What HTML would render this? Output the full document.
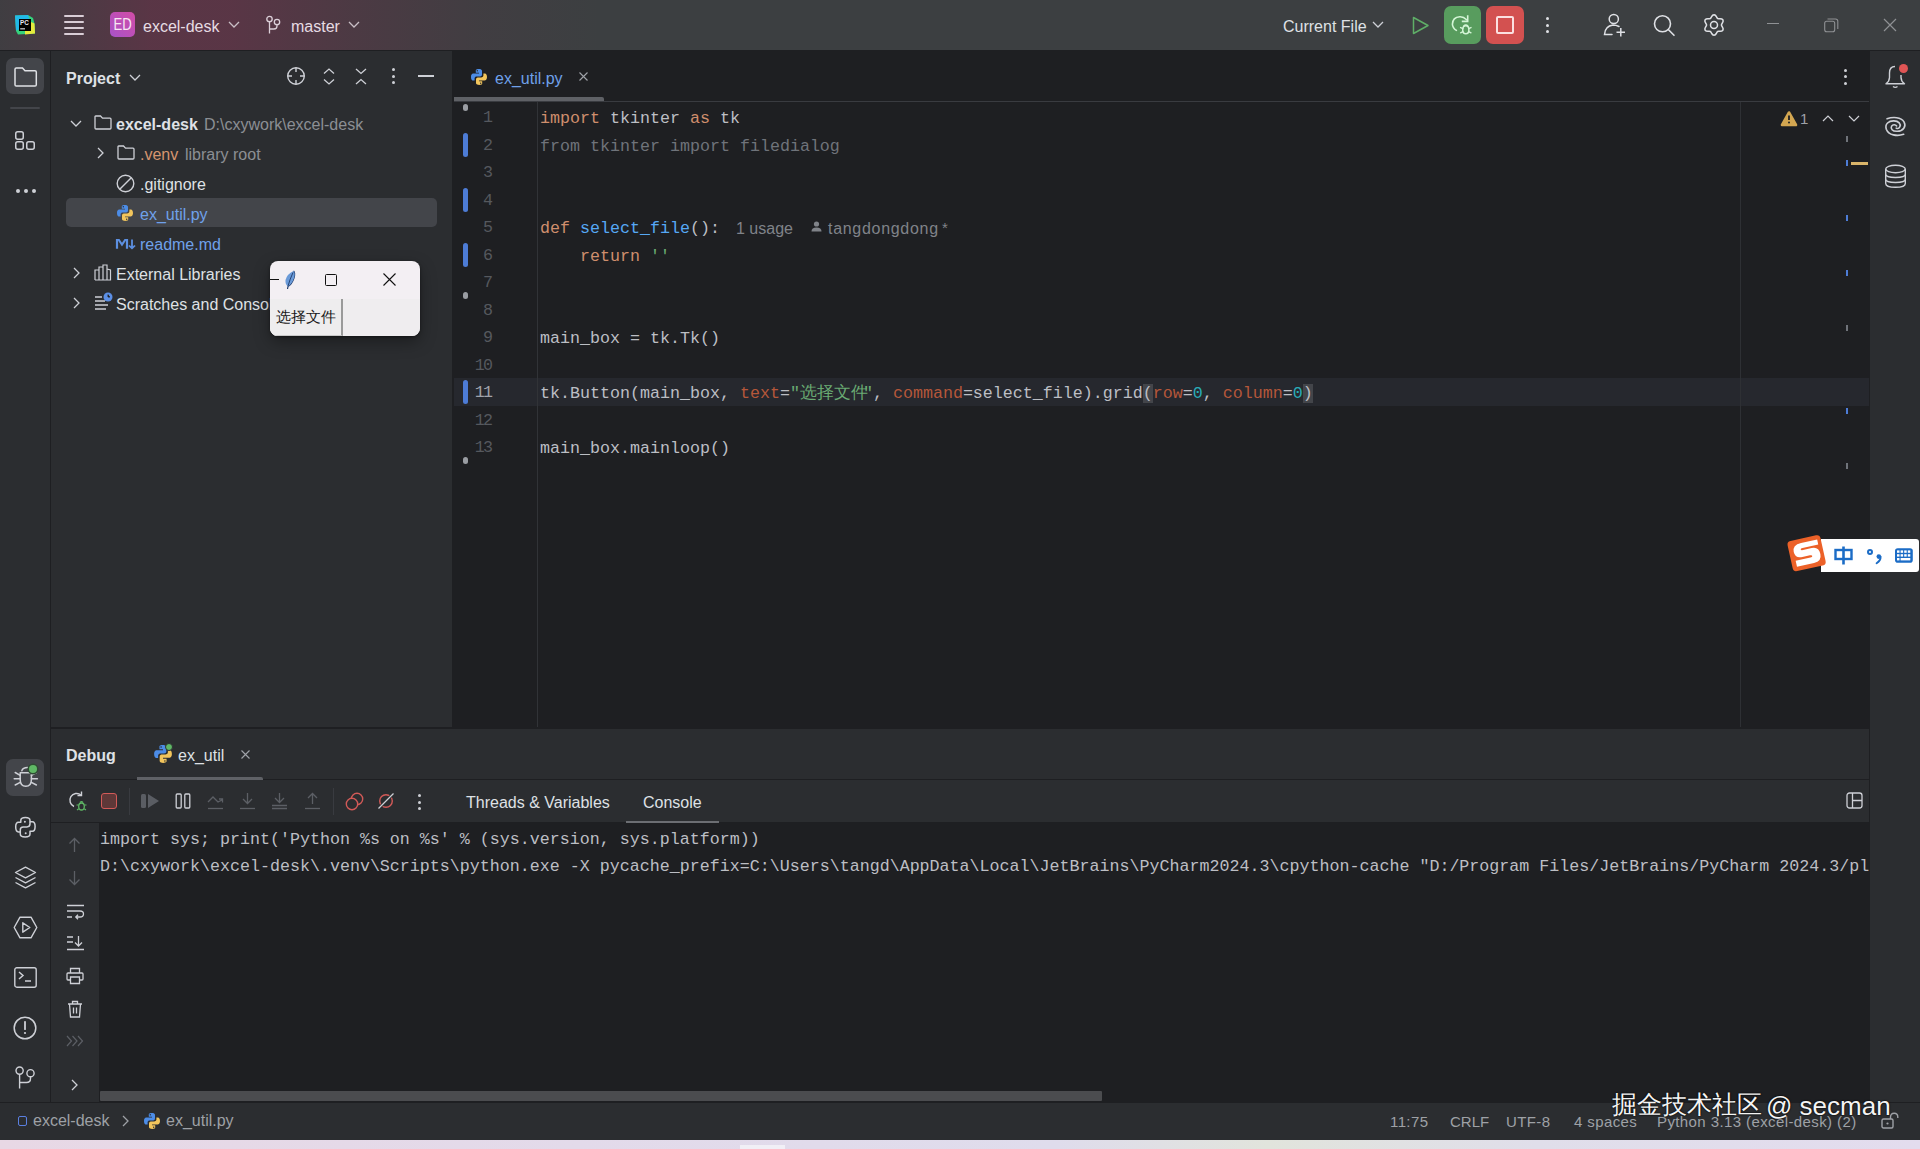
<!DOCTYPE html>
<html><head><meta charset="utf-8">
<style>
*{box-sizing:border-box}
html,body{margin:0;padding:0}
body{width:1920px;height:1149px;overflow:hidden;position:relative;background:#2B2D30;font-family:"Liberation Sans",sans-serif;font-size:16px;color:#DFE1E5}
.a{position:absolute}
.mono{font-family:"Liberation Mono",monospace;font-size:16.67px;white-space:pre}
.t{white-space:pre;line-height:20px}
svg{position:absolute;overflow:visible}
</style></head><body>

<!-- TITLE BAR -->
<div class="a" id="title" style="left:0;top:0;width:1920px;height:50px;background:linear-gradient(90deg, rgba(125,42,75,0.06) 0px, rgba(125,42,75,0.22) 70px, rgba(125,42,75,0.45) 150px, rgba(125,42,75,0.45) 230px, rgba(125,42,75,0.25) 350px, rgba(125,42,75,0.07) 480px, rgba(125,42,75,0) 600px),#3C3F41">
 <!-- pycharm logo -->
 <svg style="left:14px;top:14px" width="22" height="22" viewBox="0 0 22 22">
  <path d="M1 1.5 L14 1 L19 4 L20.5 9.5 L21 19.5 L4 20.6 L2 17 Z" fill="#34D27C"/>
  <path d="M1 1.5 L14 1 L15.5 5 L5 5 L5 15.5 L2 16.5 Z" fill="#22B9E9"/>
  <path d="M17 8 L20.5 9.5 L21 19.5 L11 20.6 L11 17 L17 17 Z" fill="#E6EA3C"/>
  <rect x="5" y="5" width="12" height="12" fill="#000"/>
  <text x="6" y="11.3" font-family="Liberation Sans" font-size="6.3" font-weight="700" fill="#E8E8F0">PC</text>
  <rect x="6.2" y="14.3" width="4.8" height="1.1" fill="#E8E8F0"/>
 </svg>
 <!-- hamburger -->
 <div class="a" style="left:64px;top:15px;width:20px;height:2px;background:#D9CDD6;border-radius:1px"></div>
 <div class="a" style="left:64px;top:21px;width:20px;height:2px;background:#D9CDD6;border-radius:1px"></div>
 <div class="a" style="left:64px;top:27px;width:20px;height:2px;background:#D9CDD6;border-radius:1px"></div>
 <div class="a" style="left:64px;top:33px;width:20px;height:2px;background:#D9CDD6;border-radius:1px"></div>
 <!-- ED badge -->
 <div class="a" style="left:110px;top:12px;width:25px;height:25px;border-radius:5px;background:linear-gradient(45deg,#A853C9,#D14CA6)"></div>
 <div class="a t" style="left:111px;top:15px;width:23px;text-align:center;font-size:16px;color:#F8E8F4;letter-spacing:0px;transform:scaleX(0.82)">ED</div>
 <div class="a t" style="left:143px;top:17px;color:#E6DCE3">excel-desk</div>
 <svg style="left:228px;top:21px" width="12" height="7" viewBox="0 0 12 7"><path d="M1 1 L6 6 L11 1" fill="none" stroke="#C9BFC6" stroke-width="1.3"/></svg>
 <!-- branch -->
 <svg style="left:264px;top:14px" width="18" height="22" viewBox="0 0 18 22">
  <circle cx="5.5" cy="5" r="2.7" fill="none" stroke="#DCD0D9" stroke-width="1.3"/>
  <circle cx="13" cy="8" r="2.7" fill="none" stroke="#DCD0D9" stroke-width="1.3"/>
  <path d="M5.5 7.7 V19.5 M13 10.7 V12 Q13 15 10 15 H5.5" fill="none" stroke="#DCD0D9" stroke-width="1.3"/>
 </svg>
 <div class="a t" style="left:291px;top:17px;color:#E6DCE3">master</div>
 <svg style="left:348px;top:21px" width="12" height="7" viewBox="0 0 12 7"><path d="M1 1 L6 6 L11 1" fill="none" stroke="#C9BFC6" stroke-width="1.3"/></svg>
 <!-- right side -->
 <div class="a t" style="left:1283px;top:17px;color:#DFE1E5">Current File</div>
 <svg style="left:1372px;top:21px" width="12" height="7" viewBox="0 0 12 7"><path d="M1 1 L6 6 L11 1" fill="none" stroke="#CED0D6" stroke-width="1.3"/></svg>
 <svg style="left:1412px;top:16px" width="18" height="19" viewBox="0 0 18 19"><path d="M1.5 1.5 L16 9.5 L1.5 17.5 Z" fill="none" stroke="#5FAE67" stroke-width="1.5" stroke-linejoin="round"/></svg>
 <div class="a" style="left:1444px;top:6px;width:37px;height:38px;border-radius:7px;background:#589C5E"></div>
 <svg style="left:1444px;top:6px" width="38" height="38" viewBox="1444 6 38 38">
  <path d="M1466.6 19.8 Q1463.5 16.6 1459.8 16.8 Q1452.6 17.4 1452.4 24.2 Q1452.6 28 1456.4 30.4" fill="none" stroke="#D4F5D6" stroke-width="1.6" stroke-linecap="round"/>
  <path d="M1467.7 15.2 V21.4 H1461.8" fill="none" stroke="#D4F5D6" stroke-width="1.6"/>
  <path d="M1465.8 25.8 C1468.4 25.8 1468.9 28.2 1468.9 30 C1468.9 32.2 1467.6 33.8 1465.8 33.8 C1464 33.8 1462.7 32.2 1462.7 30 C1462.7 28.2 1463.2 25.8 1465.8 25.8 Z" fill="none" stroke="#D4F5D6" stroke-width="1.5"/>
  <path d="M1463.6 26.3 Q1465.8 23.8 1468 26.3 M1460.6 27.6 L1462.9 28.6 M1471 27.6 L1468.7 28.6 M1460.6 32.8 L1462.9 31.6 M1471 32.8 L1468.7 31.6" fill="none" stroke="#D4F5D6" stroke-width="1.4" stroke-linecap="round"/>
 </svg>
 <div class="a" style="left:1486px;top:6px;width:38px;height:38px;border-radius:7px;background:#D35150"></div>
 <div class="a" style="left:1496px;top:16px;width:18px;height:18px;border-radius:2px;border:2px solid #FBE0E0"></div>
 <div class="a" style="left:1546px;top:17px;width:3px;height:3px;border-radius:2px;background:#DFE1E5"></div>
 <div class="a" style="left:1546px;top:23.5px;width:3px;height:3px;border-radius:2px;background:#DFE1E5"></div>
 <div class="a" style="left:1546px;top:30px;width:3px;height:3px;border-radius:2px;background:#DFE1E5"></div>
 <svg style="left:1603px;top:13px" width="24" height="25" viewBox="0 0 24 25">
  <circle cx="10.8" cy="6" r="4.6" fill="none" stroke="#DFE1E5" stroke-width="1.5"/>
  <path d="M16 13.5 Q13 12 10 12 Q2 13 1.5 21.5 H9" fill="none" stroke="#DFE1E5" stroke-width="1.5" stroke-linecap="round"/>
  <path d="M17.8 15 V23.5 M13.5 19.2 H22" fill="none" stroke="#DFE1E5" stroke-width="1.5"/>
 </svg>
 <svg style="left:1652px;top:14px" width="24" height="24" viewBox="0 0 24 24">
  <circle cx="10.5" cy="9.8" r="8" fill="none" stroke="#DFE1E5" stroke-width="1.6"/>
  <path d="M16.3 15.5 L22 21.3" fill="none" stroke="#DFE1E5" stroke-width="1.6" stroke-linecap="round"/>
 </svg>
 <svg style="left:1702px;top:13px" width="24" height="24" viewBox="-12 -12 24 24">
  <path id="gear" d="M0.00 -10.30 L1.29 -9.79 L2.29 -8.55 L2.99 -7.23 L3.70 -6.41 L4.76 -6.21 L6.26 -6.26 L7.83 -6.01 L8.92 -5.15 L9.12 -3.78 L8.55 -2.29 L7.76 -1.02 L7.40 -0.00 L7.76 1.02 L8.55 2.29 L9.12 3.78 L8.92 5.15 L7.83 6.01 L6.26 6.26 L4.76 6.21 L3.70 6.41 L2.99 7.23 L2.29 8.55 L1.29 9.79 L0.00 10.30 L-1.29 9.79 L-2.29 8.55 L-2.99 7.23 L-3.70 6.41 L-4.76 6.21 L-6.26 6.26 L-7.83 6.01 L-8.92 5.15 L-9.12 3.78 L-8.55 2.29 L-7.76 1.02 L-7.40 0.00 L-7.76 -1.02 L-8.55 -2.29 L-9.12 -3.78 L-8.92 -5.15 L-7.83 -6.01 L-6.26 -6.26 L-4.76 -6.21 L-3.70 -6.41 L-2.99 -7.23 L-2.29 -8.55 L-1.29 -9.79 Z" fill="none" stroke="#DFE1E5" stroke-width="1.5"/>
  <circle cx="0" cy="0" r="3.5" fill="none" stroke="#DFE1E5" stroke-width="1.5"/>
 </svg>
 <div class="a" style="left:1767px;top:23px;width:12px;height:1.3px;background:#8F9194"></div>
 <svg style="left:1824px;top:18px" width="15" height="15" viewBox="0 0 15 15">
  <rect x="0.7" y="3.2" width="10" height="10.5" rx="2" fill="none" stroke="#8F9194" stroke-width="1.1"/>
  <path d="M3.5 1 H11.5 Q13.8 1 13.8 3.3 V11" fill="none" stroke="#8F9194" stroke-width="1.1"/>
 </svg>
 <svg style="left:1883px;top:18px" width="14" height="14" viewBox="0 0 14 14"><path d="M1 1 L13 13 M13 1 L1 13" stroke="#8F9194" stroke-width="1.2"/></svg>
</div>
<div class="a" style="left:0;top:50px;width:1920px;height:1px;background:#1E1F22"></div>

<!-- LEFT STRIP -->
<div class="a" id="lstrip" style="left:0;top:51px;width:50px;height:1052px;background:#2B2D30">
 <div class="a" style="left:6px;top:7px;width:38px;height:36px;border-radius:7px;background:#43454A"></div>
 <svg style="left:14px;top:16px" width="24" height="20" viewBox="0 0 24 20"><path d="M2.3 1 H8.5 L11 3.8 H21 Q22.3 3.8 22.3 5.1 V17.7 Q22.3 19 21 19 H2.3 Q1 19 1 17.7 V2.3 Q1 1 2.3 1 Z" fill="none" stroke="#DFE1E5" stroke-width="1.5"/></svg>
 <div class="a" style="left:10px;top:56px;width:30px;height:2px;border-radius:1px;background:#43454A"></div>
 <svg style="left:14px;top:79px" width="24" height="24" viewBox="0 0 24 24">
  <rect x="1.75" y="1.75" width="7.5" height="7.5" rx="2" fill="none" stroke="#CED0D6" stroke-width="1.5"/>
  <rect x="1.75" y="11.75" width="7.5" height="7.5" rx="2" fill="none" stroke="#CED0D6" stroke-width="1.5"/>
  <rect x="12.75" y="11.75" width="7.5" height="7.5" rx="2" fill="none" stroke="#CED0D6" stroke-width="1.5"/>
 </svg>
 <div class="a" style="left:16px;top:138px;width:3.5px;height:3.5px;border-radius:2px;background:#CED0D6"></div>
 <div class="a" style="left:24px;top:138px;width:3.5px;height:3.5px;border-radius:2px;background:#CED0D6"></div>
 <div class="a" style="left:32px;top:138px;width:3.5px;height:3.5px;border-radius:2px;background:#CED0D6"></div>
</div>
<div class="a" style="left:50px;top:51px;width:1px;height:1052px;background:#1E1F22"></div>

<!-- PROJECT PANEL -->
<div class="a" id="project" style="left:51px;top:51px;width:401px;height:676px;background:#2B2D30;overflow:hidden"></div>
<div class="a t" style="left:66px;top:69px;font-weight:700;color:#DFE1E5">Project</div>
<svg style="left:129px;top:74px" width="12" height="7" viewBox="0 0 12 7"><path d="M1 1 L6 6 L11 1" fill="none" stroke="#CED0D6" stroke-width="1.3"/></svg>
<svg style="left:286px;top:66px" width="20" height="20" viewBox="0 0 20 20"><circle cx="10" cy="10" r="8.3" fill="none" stroke="#CED0D6" stroke-width="1.4"/><path d="M10 1.7 V6 M10 14 V18.3 M1.7 10 H6 M14 10 H18.3" stroke="#CED0D6" stroke-width="1.4"/></svg>
<svg style="left:323px;top:68px" width="12" height="17" viewBox="0 0 12 17"><path d="M1 5.5 L6 1 L11 5.5 M1 11.5 L6 16 L11 11.5" fill="none" stroke="#CED0D6" stroke-width="1.3"/></svg>
<svg style="left:355px;top:68px" width="12" height="17" viewBox="0 0 12 17"><path d="M1 1 L6 5.5 L11 1 M1 16 L6 11.5 L11 16" fill="none" stroke="#CED0D6" stroke-width="1.3"/></svg>
<div class="a" style="left:392px;top:68.3px;width:3px;height:3px;border-radius:2px;background:#CED0D6"></div>
<div class="a" style="left:392px;top:74.5px;width:3px;height:3px;border-radius:2px;background:#CED0D6"></div>
<div class="a" style="left:392px;top:80.7px;width:3px;height:3px;border-radius:2px;background:#CED0D6"></div>
<div class="a" style="left:418px;top:74.8px;width:16px;height:2px;background:#CED0D6"></div>
<div class="a" style="left:66px;top:198px;width:371px;height:29px;border-radius:5px;background:#43454A"></div>
<svg style="left:70px;top:120px" width="12" height="7" viewBox="0 0 12 7"><path d="M1 1 L6 6 L11 1" fill="none" stroke="#CED0D6" stroke-width="1.3"/></svg>
<svg style="left:94px;top:115px" width="18" height="15" viewBox="0 0 18 15"><path d="M1.7 1 H6.5 L8.5 3.2 H16 Q17 3.2 17 4.2 V13 Q17 14 16 14 H2 Q1 14 1 13 V1.8 Q1 1 1.7 1 Z" fill="none" stroke="#CED0D6" stroke-width="1.3"/></svg>
<div class="a t" style="left:116px;top:115px;font-weight:700;color:#DFE1E5">excel-desk</div>
<div class="a t" style="left:204px;top:115px;color:#8C8F94">D:\cxywork\excel-desk</div>
<svg style="left:97px;top:147px" width="7" height="12" viewBox="0 0 7 12"><path d="M1 1 L6 6 L1 11" fill="none" stroke="#CED0D6" stroke-width="1.3"/></svg>
<svg style="left:117px;top:145px" width="18" height="15" viewBox="0 0 18 15"><path d="M1.7 1 H6.5 L8.5 3.2 H16 Q17 3.2 17 4.2 V13 Q17 14 16 14 H2 Q1 14 1 13 V1.8 Q1 1 1.7 1 Z" fill="none" stroke="#CED0D6" stroke-width="1.3"/></svg>
<div class="a t" style="left:140px;top:145px;color:#D6956F">.venv</div>
<div class="a t" style="left:185px;top:145px;color:#8C8F94">library root</div>
<svg style="left:116px;top:174px" width="19" height="19" viewBox="0 0 19 19"><circle cx="9.5" cy="9.5" r="8.3" fill="none" stroke="#CED0D6" stroke-width="1.4"/><path d="M4 15 L15 4" stroke="#CED0D6" stroke-width="1.4"/></svg>
<div class="a t" style="left:140px;top:175px;color:#DFE1E5">.gitignore</div>
<svg style="left:116px;top:204px" width="18" height="18" viewBox="0 0 18 18">
  <path d="M8.8 1 C5.6 1 5.8 2.4 5.8 2.4 V4.8 H9 V5.6 H3.6 C3.6 5.6 1 5.3 1 9 C1 12.7 3.2 12.6 3.2 12.6 H4.6 V10.8 C4.6 10.8 4.5 8.6 6.8 8.6 H9.9 C9.9 8.6 12 8.6 12 6.6 V3.2 C12 3.2 12.3 1 8.8 1 Z" fill="#4C8CE6"/>
  <circle cx="7.3" cy="2.7" r="0.7" fill="#2B2D30"/>
  <path d="M9.2 17 C12.4 17 12.2 15.6 12.2 15.6 V13.2 H9 V12.4 H14.4 C14.4 12.4 17 12.7 17 9 C17 5.3 14.8 5.4 14.8 5.4 H13.4 V7.2 C13.4 7.2 13.5 9.4 11.2 9.4 H8.1 C8.1 9.4 6 9.4 6 11.4 V14.8 C6 14.8 5.7 17 9.2 17 Z" fill="#F2C55C"/>
  <circle cx="10.7" cy="15.3" r="0.7" fill="#2B2D30"/>
 </svg>
<div class="a t" style="left:140px;top:205px;color:#6FA1EA">ex_util.py</div>
<svg style="left:115.5px;top:238.5px" width="20.5" height="10.5" viewBox="0.5 0.5 20.5 13" preserveAspectRatio="none"><path d="M1.5 12.5 V1.5 H3.3 L6.5 7.5 L9.7 1.5 H11.5 V12.5" fill="none" stroke="#5C8FE0" stroke-width="2.2" stroke-linejoin="miter"/><path d="M16.5 1 V11.5 M13.5 8.5 L16.5 12 L19.5 8.5" fill="none" stroke="#5C8FE0" stroke-width="1.8"/></svg>
<div class="a t" style="left:140px;top:235px;color:#6FA1EA">readme.md</div>
<svg style="left:73px;top:267px" width="7" height="12" viewBox="0 0 7 12"><path d="M1 1 L6 6 L1 11" fill="none" stroke="#CED0D6" stroke-width="1.3"/></svg>
<svg style="left:94px;top:264px" width="18" height="17" viewBox="0 0 18 17"><path d="M1 16 V6 H5 V16 M5 16 V3 H9 V16 M9 16 V1 H13 V16 H1 M13 5 L16.5 6 V16 H13" fill="none" stroke="#CED0D6" stroke-width="1.2"/></svg>
<div class="a t" style="left:116px;top:265px;color:#DFE1E5">External Libraries</div>
<svg style="left:73px;top:297px" width="7" height="12" viewBox="0 0 7 12"><path d="M1 1 L6 6 L1 11" fill="none" stroke="#CED0D6" stroke-width="1.3"/></svg>
<svg style="left:94px;top:292px" width="20" height="20" viewBox="0 0 20 20"><path d="M1 5 H8 M1 9 H11 M1 13 H14 M1 17 H12" stroke="#CED0D6" stroke-width="1.3"/><circle cx="14" cy="5" r="4.5" fill="#5B8FE6"/><path d="M14 2.5 V5 H16" stroke="#2B2D30" stroke-width="1"/></svg>
<div class="a t" style="left:116px;top:295px;color:#DFE1E5">Scratches and Consoles</div>
<div class="a" style="left:452px;top:51px;width:2px;height:676px;background:#1E1F22"></div>

<!-- EDITOR -->
<div class="a" id="editor" style="left:454px;top:51px;width:1415px;height:676px;background:#1E1F22"></div>
<svg style="left:470px;top:68px" width="18" height="18" viewBox="0 0 18 18">
  <path d="M8.8 1 C5.6 1 5.8 2.4 5.8 2.4 V4.8 H9 V5.6 H3.6 C3.6 5.6 1 5.3 1 9 C1 12.7 3.2 12.6 3.2 12.6 H4.6 V10.8 C4.6 10.8 4.5 8.6 6.8 8.6 H9.9 C9.9 8.6 12 8.6 12 6.6 V3.2 C12 3.2 12.3 1 8.8 1 Z" fill="#4C8CE6"/>
  <circle cx="7.3" cy="2.7" r="0.7" fill="#2B2D30"/>
  <path d="M9.2 17 C12.4 17 12.2 15.6 12.2 15.6 V13.2 H9 V12.4 H14.4 C14.4 12.4 17 12.7 17 9 C17 5.3 14.8 5.4 14.8 5.4 H13.4 V7.2 C13.4 7.2 13.5 9.4 11.2 9.4 H8.1 C8.1 9.4 6 9.4 6 11.4 V14.8 C6 14.8 5.7 17 9.2 17 Z" fill="#F2C55C"/>
  <circle cx="10.7" cy="15.3" r="0.7" fill="#2B2D30"/>
 </svg>
<div class="a t" style="left:495px;top:69px;color:#6FA1EA">ex_util.py</div>
<svg style="left:579px;top:72px" width="9" height="9" viewBox="0 0 9 9"><path d="M0.5 0.5 L8.5 8.5 M8.5 0.5 L0.5 8.5" stroke="#A0A3A9" stroke-width="1.1"/></svg>
<div class="a" style="left:454px;top:101px;width:1415px;height:1px;background:#393B40"></div>
<div class="a" style="left:454px;top:97px;width:150px;height:4px;background:#5F6166;border-radius:0 2px 0 0"></div>
<div class="a" style="left:1844px;top:68.5px;width:3px;height:3px;border-radius:2px;background:#CED0D6"></div>
<div class="a" style="left:1844px;top:75px;width:3px;height:3px;border-radius:2px;background:#CED0D6"></div>
<div class="a" style="left:1844px;top:81.5px;width:3px;height:3px;border-radius:2px;background:#CED0D6"></div>
<div class="a" style="left:454px;top:378px;width:1415px;height:27.5px;background:#26282E"></div>
<div class="a" style="left:537px;top:102px;width:1px;height:625px;background:#313337"></div>
<div class="a" style="left:1740px;top:102px;width:1px;height:625px;background:#2E3034"></div>
<div class="a mono" style="left:461.5px;top:108.0px;width:30px;text-align:right;line-height:20px;letter-spacing:-1.6px;color:#55585E">1</div>
<div class="a mono" style="left:461.5px;top:135.5px;width:30px;text-align:right;line-height:20px;letter-spacing:-1.6px;color:#55585E">2</div>
<div class="a mono" style="left:461.5px;top:163.0px;width:30px;text-align:right;line-height:20px;letter-spacing:-1.6px;color:#55585E">3</div>
<div class="a mono" style="left:461.5px;top:190.5px;width:30px;text-align:right;line-height:20px;letter-spacing:-1.6px;color:#55585E">4</div>
<div class="a mono" style="left:461.5px;top:218.0px;width:30px;text-align:right;line-height:20px;letter-spacing:-1.6px;color:#55585E">5</div>
<div class="a mono" style="left:461.5px;top:245.5px;width:30px;text-align:right;line-height:20px;letter-spacing:-1.6px;color:#55585E">6</div>
<div class="a mono" style="left:461.5px;top:273.0px;width:30px;text-align:right;line-height:20px;letter-spacing:-1.6px;color:#55585E">7</div>
<div class="a mono" style="left:461.5px;top:300.5px;width:30px;text-align:right;line-height:20px;letter-spacing:-1.6px;color:#55585E">8</div>
<div class="a mono" style="left:461.5px;top:328.0px;width:30px;text-align:right;line-height:20px;letter-spacing:-1.6px;color:#55585E">9</div>
<div class="a mono" style="left:461.5px;top:355.5px;width:30px;text-align:right;line-height:20px;letter-spacing:-1.6px;color:#55585E">10</div>
<div class="a mono" style="left:461.5px;top:383.0px;width:30px;text-align:right;line-height:20px;letter-spacing:-1.6px;color:#A1A3AB">11</div>
<div class="a mono" style="left:461.5px;top:410.5px;width:30px;text-align:right;line-height:20px;letter-spacing:-1.6px;color:#55585E">12</div>
<div class="a mono" style="left:461.5px;top:438.0px;width:30px;text-align:right;line-height:20px;letter-spacing:-1.6px;color:#55585E">13</div>
<div class="a" style="left:463px;top:132.5px;width:5px;height:24px;border-radius:2.5px;background:#4D7CD6"></div>
<div class="a" style="left:463px;top:187.5px;width:5px;height:24px;border-radius:2.5px;background:#4D7CD6"></div>
<div class="a" style="left:463px;top:242.5px;width:5px;height:24px;border-radius:2.5px;background:#4D7CD6"></div>
<div class="a" style="left:463px;top:380.0px;width:5px;height:24px;border-radius:2.5px;background:#4D7CD6"></div>
<div class="a" style="left:463px;top:104px;width:5px;height:7px;border-radius:2.5px;background:#9A9DA3"></div>
<div class="a" style="left:463px;top:292px;width:5px;height:7px;border-radius:2.5px;background:#9A9DA3"></div>
<div class="a" style="left:463px;top:457px;width:5px;height:7px;border-radius:2.5px;background:#9A9DA3"></div>
<div class="a mono" style="left:540px;top:109.0px;line-height:20px"><span style="color:#CF8E6D">import</span><span style="color:#BCBEC4"> tkinter </span><span style="color:#CF8E6D">as</span><span style="color:#BCBEC4"> tk</span></div>
<div class="a mono" style="left:540px;top:136.5px;line-height:20px"><span style="color:#6F737A">from tkinter import filedialog</span></div>
<div class="a mono" style="left:540px;top:219.0px;line-height:20px"><span style="color:#CF8E6D">def </span><span style="color:#56A8F5">select_file</span><span style="color:#BCBEC4">():</span></div>
<div class="a mono" style="left:540px;top:246.5px;line-height:20px"><span style="color:#CF8E6D">    return </span><span style="color:#6AAB73">''</span></div>
<div class="a mono" style="left:540px;top:329.0px;line-height:20px"><span style="color:#BCBEC4">main_box = tk.Tk()</span></div>
<div class="a mono" style="left:540px;top:384.0px;line-height:20px"><span style="color:#BCBEC4">tk.Button(main_box, </span><span style="color:#B5573A">text</span><span style="color:#BCBEC4">=</span><span style="color:#6AAB73">"<span style="display:inline-block;width:63px">选择文件</span>"</span><span style="color:#BCBEC4">, </span><span style="color:#B5573A">command</span><span style="color:#BCBEC4">=select_file).grid</span><span style="color:#BCBEC4;background:#43454A">(</span><span style="color:#B5573A">row</span><span style="color:#BCBEC4">=</span><span style="color:#2AACB8">0</span><span style="color:#BCBEC4">, </span><span style="color:#B5573A">column</span><span style="color:#BCBEC4">=</span><span style="color:#2AACB8">0</span><span style="color:#BCBEC4;background:#43454A">)</span></div>
<div class="a mono" style="left:540px;top:439.0px;line-height:20px"><span style="color:#BCBEC4">main_box.mainloop()</span></div>
<div class="a t" style="left:736px;top:219px;font-size:16px;color:#808389">1 usage</div>
<svg style="left:811px;top:221px" width="11" height="11" viewBox="0 0 11 11"><circle cx="5.5" cy="3" r="2.6" fill="#808389"/><path d="M0.5 10.5 Q0.5 6.5 5.5 6.5 Q10.5 6.5 10.5 10.5 Z" fill="#808389"/></svg>
<div class="a t" style="left:828px;top:219px;font-size:16px;letter-spacing:0.7px;color:#808389">tangdongdong</div>
<div class="a t" style="left:942px;top:218px;font-size:15px;color:#808389">*</div>
<svg style="left:1780px;top:110px" width="18" height="17" viewBox="0 0 18 17"><path d="M9 2.5 L16 15 H2 Z" fill="#D3A651" stroke="#D3A651" stroke-width="2.6" stroke-linejoin="round"/><path d="M9 5.5 V10" stroke="#1E1F22" stroke-width="1.8"/><circle cx="9" cy="12.5" r="1" fill="#1E1F22"/></svg>
<div class="a t" style="left:1800px;top:109px;font-size:15px;color:#9EA1A6">1</div>
<svg style="left:1822px;top:115px" width="12" height="7" viewBox="0 0 12 7"><path d="M1 6 L6 1 L11 6" fill="none" stroke="#CED0D6" stroke-width="1.2"/></svg>
<svg style="left:1848px;top:115px" width="12" height="7" viewBox="0 0 12 7"><path d="M1 1 L6 6 L11 1" fill="none" stroke="#CED0D6" stroke-width="1.2"/></svg>
<div class="a" style="left:1846px;top:136px;width:2px;height:6px;background:#6F737A"></div>
<div class="a" style="left:1846px;top:160px;width:2px;height:6px;background:#4D7CD6"></div>
<div class="a" style="left:1846px;top:215px;width:2px;height:6px;background:#4D7CD6"></div>
<div class="a" style="left:1846px;top:270px;width:2px;height:6px;background:#4D7CD6"></div>
<div class="a" style="left:1846px;top:325px;width:2px;height:6px;background:#6F737A"></div>
<div class="a" style="left:1846px;top:408px;width:2px;height:6px;background:#4D7CD6"></div>
<div class="a" style="left:1846px;top:463px;width:2px;height:6px;background:#6F737A"></div>
<div class="a" style="left:1851px;top:162px;width:17px;height:3px;background:#D9B46A"></div>

<!-- RIGHT STRIP -->
<div class="a" id="rstrip" style="left:1869px;top:51px;width:51px;height:1052px;background:#2B2D30"></div>
<div class="a" style="left:1869px;top:51px;width:1px;height:1052px;background:#1E1F22"></div>

<!-- H SEPARATOR -->
<div class="a" style="left:51px;top:727px;width:1818px;height:2px;background:#1E1F22"></div>

<!-- DEBUG PANEL -->
<div class="a" id="debug" style="left:51px;top:729px;width:1818px;height:373px;background:#2B2D30"></div>
<div class="a t" style="left:66px;top:746px;font-weight:700;color:#DFE1E5">Debug</div>
<svg style="left:153px;top:744px" width="20" height="20" viewBox="0 0 18 18">
  <path d="M8.8 1 C5.6 1 5.8 2.4 5.8 2.4 V4.8 H9 V5.6 H3.6 C3.6 5.6 1 5.3 1 9 C1 12.7 3.2 12.6 3.2 12.6 H4.6 V10.8 C4.6 10.8 4.5 8.6 6.8 8.6 H9.9 C9.9 8.6 12 8.6 12 6.6 V3.2 C12 3.2 12.3 1 8.8 1 Z" fill="#4C8CE6"/>
  <circle cx="7.3" cy="2.7" r="0.7" fill="#2B2D30"/>
  <path d="M9.2 17 C12.4 17 12.2 15.6 12.2 15.6 V13.2 H9 V12.4 H14.4 C14.4 12.4 17 12.7 17 9 C17 5.3 14.8 5.4 14.8 5.4 H13.4 V7.2 C13.4 7.2 13.5 9.4 11.2 9.4 H8.1 C8.1 9.4 6 9.4 6 11.4 V14.8 C6 14.8 5.7 17 9.2 17 Z" fill="#F2C55C"/>
  <circle cx="10.7" cy="15.3" r="0.7" fill="#2B2D30"/>
 </svg>
<div class="a" style="left:165px;top:743px;width:8px;height:8px;border-radius:4px;background:#5FB865;border:1px solid #2B2D30"></div>
<div class="a t" style="left:178px;top:746px;color:#DFE1E5">ex_util</div>
<svg style="left:241px;top:750px" width="9" height="9" viewBox="0 0 9 9"><path d="M0.5 0.5 L8.5 8.5 M8.5 0.5 L0.5 8.5" stroke="#A0A3A9" stroke-width="1.1"/></svg>
<div class="a" style="left:51px;top:779px;width:1818px;height:1px;background:#1E1F22"></div>
<div class="a" style="left:137px;top:777px;width:126px;height:3px;background:#5F6166;border-radius:0 2px 0 0"></div>
<svg style="left:66px;top:791px" width="24" height="22" viewBox="0 0 24 22">
  <path d="M15 4 A6.8 6.8 0 1 0 8 15.5" fill="none" stroke="#CED0D6" stroke-width="1.4"/>
  <path d="M15.5 0.5 V4.5 H11.5" fill="none" stroke="#CED0D6" stroke-width="1.4"/>
  <ellipse cx="15.5" cy="15.5" rx="2.8" ry="3.5" fill="none" stroke="#5FB865" stroke-width="1.3"/>
  <path d="M14 11.5 Q15.5 10 17 11.5 M10.5 14 H12.5 M18.5 14 H20.5 M11 19 L12.8 17.8 M20 19 L18.2 17.8" fill="none" stroke="#5FB865" stroke-width="1.2"/>
 </svg>
<div class="a" style="left:101px;top:793px;width:16px;height:16px;border-radius:3px;background:#5E3838;border:1.5px solid #D25A58"></div>
<div class="a" style="left:129px;top:788px;width:1px;height:27px;background:#393B40"></div>
<svg style="left:140px;top:793px" width="20" height="16" viewBox="0 0 20 16"><rect x="1" y="1" width="5" height="14" rx="1.5" fill="#5A5D63"/><path d="M8 1 L19 8 L8 15 Z" fill="#5A5D63"/></svg>
<svg style="left:175px;top:793px" width="16" height="16" viewBox="0 0 16 16"><rect x="1.2" y="1" width="5" height="14" rx="1" fill="none" stroke="#CED0D6" stroke-width="1.3"/><rect x="9.8" y="1" width="5" height="14" rx="1" fill="none" stroke="#CED0D6" stroke-width="1.3"/></svg>
<svg style="left:207px;top:793px" width="17" height="17" viewBox="0 0 17 17"><path d="M1 9 L6 4 L11 9 L15 7 M12 6 H15.5 V9.5" fill="none" stroke="#5C5F65" stroke-width="1.3"/><path d="M1 15.5 H16" stroke="#5C5F65" stroke-width="1.3"/></svg>
<svg style="left:239px;top:792px" width="17" height="18" viewBox="0 0 17 18"><path d="M8.5 1 V11 M4 7 L8.5 11.5 L13 7" fill="none" stroke="#5C5F65" stroke-width="1.3"/><path d="M1 16.5 H16" stroke="#5C5F65" stroke-width="1.3"/></svg>
<svg style="left:271px;top:792px" width="17" height="18" viewBox="0 0 17 18"><path d="M8.5 1 V10 M4 6 L8.5 10.5 L13 6" fill="none" stroke="#5C5F65" stroke-width="1.3"/><path d="M1 13.5 H16 M1 16.5 H16" stroke="#5C5F65" stroke-width="1.3"/></svg>
<svg style="left:304px;top:792px" width="17" height="18" viewBox="0 0 17 18"><path d="M8.5 12 V2 M4 6 L8.5 1.5 L13 6" fill="none" stroke="#5C5F65" stroke-width="1.3"/><path d="M1 16.5 H16" stroke="#5C5F65" stroke-width="1.3"/></svg>
<div class="a" style="left:333px;top:788px;width:1px;height:27px;background:#393B40"></div>
<svg style="left:345px;top:792px" width="19" height="19" viewBox="0 0 19 19"><circle cx="12" cy="7" r="5.7" fill="none" stroke="#D25A58" stroke-width="1.4"/><circle cx="7" cy="12" r="5.7" fill="#2B2D30" stroke="#D25A58" stroke-width="1.4"/></svg>
<svg style="left:377px;top:792px" width="18" height="18" viewBox="0 0 18 18"><circle cx="9" cy="9" r="6.3" fill="none" stroke="#D25A58" stroke-width="1.4"/><path d="M1.5 16.5 L16.5 1.5" stroke="#2B2D30" stroke-width="3"/><path d="M1.5 16.5 L16.5 1.5" stroke="#CED0D6" stroke-width="1.3"/></svg>
<div class="a" style="left:418px;top:794px;width:3px;height:3px;border-radius:2px;background:#CED0D6"></div>
<div class="a" style="left:418px;top:800.5px;width:3px;height:3px;border-radius:2px;background:#CED0D6"></div>
<div class="a" style="left:418px;top:807px;width:3px;height:3px;border-radius:2px;background:#CED0D6"></div>
<div class="a t" style="left:466px;top:793px;color:#DFE1E5">Threads &amp; Variables</div>
<div class="a t" style="left:643px;top:793px;color:#DFE1E5">Console</div>
<div class="a" style="left:626px;top:821px;width:93px;height:2px;background:#6C6E73;z-index:1"></div>
<svg style="left:1846px;top:792px" width="17" height="17" viewBox="0 0 17 17"><rect x="1" y="1" width="15" height="15" rx="2.5" fill="none" stroke="#CED0D6" stroke-width="1.3"/><path d="M6.5 1 V16 M6.5 8.5 H16" stroke="#CED0D6" stroke-width="1.3"/></svg>
<div class="a" style="left:51px;top:822px;width:1818px;height:1px;background:#1E1F22"></div>
<div class="a" style="left:99px;top:823px;width:1770px;height:279px;background:#1E1F22;overflow:hidden"><div class="a mono" style="left:1px;top:7px;line-height:20px;color:#BCBEC4">import sys; print('Python %s on %s' % (sys.version, sys.platform))</div><div class="a mono" style="left:1px;top:34px;line-height:20px;color:#BCBEC4">D:\cxywork\excel-desk\.venv\Scripts\python.exe -X pycache_prefix=C:\Users\tangd\AppData\Local\JetBrains\PyCharm2024.3\cpython-cache "D:/Program Files/JetBrains/PyCharm 2024.3/plugins/python-ce/helpers/pydev/pydevd.py"</div></div>
<div class="a" style="left:100px;top:1091px;width:1002px;height:10px;border-radius:1px;background:#4B4C4F"></div>
<svg style="left:68px;top:837px" width="13" height="16" viewBox="0 0 13 16"><path d="M6.5 15 V2 M1.5 6.5 L6.5 1.5 L11.5 6.5" fill="none" stroke="#5C5F65" stroke-width="1.3"/></svg>
<svg style="left:68px;top:870px" width="13" height="16" viewBox="0 0 13 16"><path d="M6.5 1 V14 M1.5 9.5 L6.5 14.5 L11.5 9.5" fill="none" stroke="#5C5F65" stroke-width="1.3"/></svg>
<svg style="left:66px;top:904px" width="19" height="17" viewBox="0 0 19 17"><path d="M1 1.5 H18 M1 7 H14 Q17.5 7 17.5 10 Q17.5 13 14 13 H10 M12 10.8 L9.8 13 L12 15.2 M1 13 H6" fill="none" stroke="#CED0D6" stroke-width="1.3"/></svg>
<svg style="left:66px;top:935px" width="19" height="16" viewBox="0 0 19 16"><path d="M1 2 H7 M1 7 H7 M1 14.5 H18 M12.5 1 V11 M9 7.5 L12.5 11 L16 7.5" fill="none" stroke="#CED0D6" stroke-width="1.3"/></svg>
<svg style="left:66px;top:967px" width="18" height="18" viewBox="0 0 18 18"><path d="M4.5 6 V1.5 H13.5 V6 M4.5 13 H2 Q1 13 1 12 V7 Q1 6 2 6 H16 Q17 6 17 7 V12 Q17 13 16 13 H13.5 M4.5 10 H13.5 V16.5 H4.5 Z" fill="none" stroke="#CED0D6" stroke-width="1.3"/></svg>
<svg style="left:67px;top:1000px" width="16" height="18" viewBox="0 0 16 18"><path d="M1 4 H15 M5.5 4 V1.5 H10.5 V4 M2.5 4 L3.5 17 H12.5 L13.5 4 M6.5 7.5 V13.5 M9.5 7.5 V13.5" fill="none" stroke="#CED0D6" stroke-width="1.3"/></svg>
<svg style="left:66px;top:1035px" width="18" height="12" viewBox="0 0 18 12"><path d="M1 1 L5.5 6 L1 11 M6.5 1 L11 6 L6.5 11 M12 1 L16.5 6 L12 11" fill="none" stroke="#5C5F65" stroke-width="1.2"/></svg>
<svg style="left:71px;top:1079px" width="7" height="12" viewBox="0 0 7 12"><path d="M1 1 L6 6 L1 11" fill="none" stroke="#CED0D6" stroke-width="1.3"/></svg>

<!-- STATUS BAR -->
<div class="a" style="left:0;top:1102px;width:1920px;height:1px;background:#1E1F22"></div>
<div class="a" id="status" style="left:0;top:1103px;width:1920px;height:37px;background:#2B2D30"></div>
<div class="a" style="left:0;top:1140px;width:1920px;height:9px;background:linear-gradient(90deg,#E8D8E5 0%,#E3DAEA 30%,#DFDCEC 55%,#E1E4DC 66%,#E0DEEA 80%,#E3DCEE 100%)"></div>
<div class="a" style="left:740px;top:1145px;width:45px;height:4px;background:#F1EFF6"></div>

<div class="a" style="left:6px;top:759px;width:38px;height:37px;border-radius:7px;background:#43454A"></div>
<svg style="left:8px;top:760px" width="36" height="36" viewBox="0 0 36 36">
 <path d="M12.2 12.8 H23.4 V19.5 Q23.4 26.3 17.8 26.3 Q12.2 26.3 12.2 19.5 Z" fill="none" stroke="#CED0D6" stroke-width="1.5" stroke-linejoin="round"/>
 <path d="M13.8 10.8 Q14.8 7.6 19.6 7.6" fill="none" stroke="#CED0D6" stroke-width="1.5" stroke-linecap="round"/>
 <path d="M7.2 12.5 L12.2 15.3 M6.2 18.8 H12.2 M7.2 25 L12.2 22.4 M28.4 12.5 L23.4 15.3 M29.4 18.8 H23.4 M28.4 25 L23.4 22.4" fill="none" stroke="#CED0D6" stroke-width="1.5" stroke-linecap="round"/>
</svg>
<div class="a" style="left:29px;top:765px;width:8.4px;height:8.4px;border-radius:5px;background:#5FB865;box-shadow:0 0 0 1.5px #2F4A33"></div>
<svg style="left:10px;top:810px" width="30" height="30" viewBox="0 0 30 30">
 <path d="M10.8 12.3 V10.5 Q10.8 7.5 15.4 7.5 Q20 7.5 20 10.5 V11.7 H22.3 Q25.1 11.7 25.1 16.5 Q25.1 21.3 22.3 21.3 H20 V24 Q20 27 15.2 27 Q10.3 27 10.3 24 V21.9 H8.5 Q5.7 21.9 5.7 17.1 Q5.7 12.3 8.5 12.3 Z" fill="none" stroke="#CED0D6" stroke-width="1.5" stroke-linejoin="round"/>
 <path d="M20 11.7 V13.8 Q20 16.9 16.9 16.9 H13.2 Q10.3 16.9 10.3 19.8 V21.9" fill="none" stroke="#CED0D6" stroke-width="1.5"/>
 <circle cx="14.9" cy="11.7" r="1" fill="#CED0D6"/><circle cx="15.7" cy="23.3" r="1" fill="#CED0D6"/>
</svg>
<svg style="left:14px;top:866px" width="23" height="24" viewBox="0 0 23 24">
 <path d="M11.5 1.2 L21.5 6.5 L11.5 11.8 L1.5 6.5 Z" fill="none" stroke="#CED0D6" stroke-width="1.4" stroke-linejoin="round"/>
 <path d="M1.5 11.5 L11.5 16.8 L21.5 11.5 M1.5 16.5 L11.5 21.8 L21.5 16.5" fill="none" stroke="#CED0D6" stroke-width="1.4" stroke-linejoin="round"/>
</svg>
<svg style="left:13px;top:916px" width="25" height="23" viewBox="0 0 25 23">
 <path d="M7 1.2 H18 L23.8 11.5 L18 21.8 H7 L1.2 11.5 Z" fill="none" stroke="#CED0D6" stroke-width="1.4" stroke-linejoin="round"/>
 <path d="M9.8 6.8 L16.8 11.5 L9.8 16.2 Z" fill="none" stroke="#CED0D6" stroke-width="1.4" stroke-linejoin="round"/>
</svg>
<svg style="left:14px;top:967px" width="23" height="21" viewBox="0 0 23 21">
 <rect x="0.8" y="0.8" width="21.4" height="19.4" rx="2" fill="none" stroke="#CED0D6" stroke-width="1.4"/>
 <path d="M5 5 L9 8.5 L5 12 M11 14 H17" fill="none" stroke="#CED0D6" stroke-width="1.5"/>
</svg>
<svg style="left:13px;top:1016px" width="24" height="24" viewBox="0 0 24 24">
 <circle cx="12" cy="12" r="10.8" fill="none" stroke="#CED0D6" stroke-width="1.5"/>
 <path d="M12 5.8 V13.2" stroke="#CED0D6" stroke-width="1.8" stroke-linecap="round"/><circle cx="12" cy="17" r="1.1" fill="#CED0D6"/>
</svg>
<svg style="left:14px;top:1065px" width="22" height="25" viewBox="0 0 22 25">
 <circle cx="5.6" cy="5.6" r="3.6" fill="none" stroke="#CED0D6" stroke-width="1.4"/>
 <circle cx="16.5" cy="8.2" r="3.6" fill="none" stroke="#CED0D6" stroke-width="1.4"/>
 <path d="M5.6 9.2 V23.5 M16.5 11.8 V13.5 Q16.5 17.5 12.5 17.5 H5.6" fill="none" stroke="#CED0D6" stroke-width="1.4"/>
</svg>
<svg style="left:1884px;top:64px" width="24" height="26" viewBox="0 0 24 26">
 <path d="M11 2.5 Q5.5 2.5 5.5 9 V13.5 Q5.5 17 2 19.8 H20.5 Q17 17 17 13.5 V11" fill="none" stroke="#CED0D6" stroke-width="1.4" stroke-linejoin="round"/>
 <path d="M9 22.5 Q11.3 24.2 13.5 22.5" fill="none" stroke="#CED0D6" stroke-width="1.4"/>
</svg>
<div class="a" style="left:1899px;top:64px;width:9px;height:9px;border-radius:5px;background:#E05555"></div>
<svg style="left:1880px;top:110px" width="32" height="32" viewBox="1880 110 32 32">
 <path d="M1887 118.8 C1893 116.6 1901 117 1904 121.8 C1906.6 126.4 1903.2 131 1897.2 131.3 C1892.3 131.5 1890.3 128.6 1891.6 126.2 C1892.8 124.2 1895.6 124.4 1896.6 126" fill="none" stroke="#CED0D6" stroke-width="1.6" stroke-linecap="round"/>
 <path d="M1903.7 134.3 C1897 136.6 1888.6 135.2 1886.3 129.2 C1884.6 123.8 1888.8 120.8 1893.8 120.9 C1898.8 121 1901.2 124 1899.8 126.8 C1899 128.4 1897.4 128.7 1896.2 128.1" fill="none" stroke="#CED0D6" stroke-width="1.6" stroke-linecap="round"/>
</svg>
<svg style="left:1884px;top:164px" width="23" height="25" viewBox="0 0 23 25">
 <ellipse cx="11.5" cy="5" rx="9.8" ry="3.8" fill="none" stroke="#CED0D6" stroke-width="1.4"/>
 <path d="M1.7 5 V19.5 Q1.7 23.3 11.5 23.3 Q21.3 23.3 21.3 19.5 V5 M1.7 10 Q1.7 13.5 11.5 13.5 Q21.3 13.5 21.3 10 M1.7 15 Q1.7 18.5 11.5 18.5 Q21.3 18.5 21.3 15" fill="none" stroke="#CED0D6" stroke-width="1.4"/>
</svg>
<div class="a" style="left:18px;top:1116px;width:9px;height:10px;border-radius:2px;border:1.5px solid #5A7FE0"></div>
<div class="a t" style="left:33px;top:1111px;color:#9EA1A6">excel-desk</div>
<svg style="left:122px;top:1115px" width="7" height="12" viewBox="0 0 7 12"><path d="M1 1 L6 6 L1 11" fill="none" stroke="#9EA1A6" stroke-width="1.3"/></svg>
<svg style="left:143px;top:1112px" width="18" height="18" viewBox="0 0 18 18">
  <path d="M8.8 1 C5.6 1 5.8 2.4 5.8 2.4 V4.8 H9 V5.6 H3.6 C3.6 5.6 1 5.3 1 9 C1 12.7 3.2 12.6 3.2 12.6 H4.6 V10.8 C4.6 10.8 4.5 8.6 6.8 8.6 H9.9 C9.9 8.6 12 8.6 12 6.6 V3.2 C12 3.2 12.3 1 8.8 1 Z" fill="#4C8CE6"/>
  <circle cx="7.3" cy="2.7" r="0.7" fill="#2B2D30"/>
  <path d="M9.2 17 C12.4 17 12.2 15.6 12.2 15.6 V13.2 H9 V12.4 H14.4 C14.4 12.4 17 12.7 17 9 C17 5.3 14.8 5.4 14.8 5.4 H13.4 V7.2 C13.4 7.2 13.5 9.4 11.2 9.4 H8.1 C8.1 9.4 6 9.4 6 11.4 V14.8 C6 14.8 5.7 17 9.2 17 Z" fill="#F2C55C"/>
  <circle cx="10.7" cy="15.3" r="0.7" fill="#2B2D30"/>
 </svg>
<div class="a t" style="left:166px;top:1111px;color:#9EA1A6">ex_util.py</div>
<div class="a t" style="left:1390px;top:1112px;font-size:15px;letter-spacing:0.4px;color:#9EA1A6">11:75</div>
<div class="a t" style="left:1450px;top:1112px;font-size:15px;letter-spacing:0px;color:#9EA1A6">CRLF</div>
<div class="a t" style="left:1506px;top:1112px;font-size:15px;letter-spacing:0.4px;color:#9EA1A6">UTF-8</div>
<div class="a t" style="left:1574px;top:1112px;font-size:15px;letter-spacing:0.4px;color:#9EA1A6">4 spaces</div>
<div class="a t" style="left:1657px;top:1112px;font-size:15px;letter-spacing:0.4px;color:#9EA1A6">Python 3.13 (excel-desk) (2)</div>
<svg style="left:1881px;top:1112px" width="18" height="17" viewBox="0 0 18 17">
 <rect x="1" y="7" width="11" height="9" rx="1.5" fill="none" stroke="#9EA1A6" stroke-width="1.4"/>
 <path d="M9.5 7 V5 Q9.5 1.2 13.2 1.2 Q16.8 1.2 16.8 5 V6" fill="none" stroke="#9EA1A6" stroke-width="1.4"/>
 <circle cx="6.5" cy="11.5" r="1.1" fill="#9EA1A6"/>
</svg>
<div class="a" style="left:1612px;top:1089px;white-space:nowrap;font-size:24.5px;line-height:32px;color:#F4F4F4;text-shadow:0 0 2px #000,0 0 1px #000">掘金技术社区</div>
<div class="a" style="left:1766px;top:1090px;white-space:nowrap;font-size:26px;line-height:32px;color:#F4F4F4;text-shadow:0 0 2px #000,0 0 1px #000">@ secman</div>
<div class="a" style="left:270px;top:261px;width:150px;height:75px;border-radius:8px;background:#F3EFF3;overflow:hidden;box-shadow:0 6px 16px rgba(0,0,0,0.35),0 1px 3px rgba(0,0,0,0.4)">
 <div class="a" style="left:0;top:38px;width:150px;height:37px;background:#EFEDEF"></div>
 <div class="a" style="left:0;top:38px;width:73px;height:37px;background:#EEEDEE;border-right:2px solid #9A9A9A;border-bottom:1px solid #C8C8C8"></div>
 <div class="a" style="left:6px;top:46px;font-size:15px;line-height:20px;color:#1A1A1A;white-space:nowrap"><span style="display:inline-block;width:60px">选择文件</span></div>
 <div class="a" style="left:0;top:17.5px;width:9px;height:1.2px;background:#111"></div>
 <svg style="left:13px;top:9px" width="13" height="20" viewBox="0 0 13 20"><path d="M10.5 1 Q12.5 3 11 8 Q9 14 5 16.5 L4.5 19" fill="none" stroke="#1E3A6A" stroke-width="1.2"/><path d="M10.5 1 Q4 4 2.5 10 Q2 14 5 16.5 Q9 14 11 8 Q12.5 3 10.5 1 Z" fill="#6A9AD8"/><path d="M10 2.5 Q7 9 5 16" stroke="#1E3A6A" stroke-width="0.9" fill="none"/></svg>
 <div class="a" style="left:55px;top:12.5px;width:12px;height:12px;border:1.3px solid #111;border-radius:1.5px"></div>
 <svg style="left:113px;top:12px" width="13" height="13" viewBox="0 0 13 13"><path d="M0.5 0.5 L12.5 12.5 M12.5 0.5 L0.5 12.5" stroke="#111" stroke-width="1.1"/></svg>
</div>
<div class="a" style="left:1821px;top:539px;width:98px;height:33px;background:#FFFFFF;border-radius:0 3px 3px 0"></div>
<svg style="left:1780px;top:525px" width="52" height="52" viewBox="1780 525 52 52">
 <g transform="translate(1806.6 553.2) rotate(-12.5) scale(1.08)">
  <rect x="-15.6" y="-14.3" width="31.2" height="28.6" rx="3.5" fill="#EC6128"/>
  <path d="M-3 -10.3 H12.3 V-5.6 H-2.6 Q-4.6 -5.6 -4.6 -4.6 Q-4.6 -3.6 -2.6 -3.6 H5.6 Q12.3 -3.6 12.3 3.4 Q12.3 10.3 4.8 10.3 H-11.4 V4.6 H2.6 Q4.6 4.6 4.6 3.6 Q4.6 2.6 2.6 2.6 H-4.6 Q-11.4 2.6 -11.4 -3.6 Q-11.4 -10.3 -3 -10.3 Z" fill="#FFFFFF"/>
 </g>
</svg>
<svg style="left:1834px;top:546px" width="20" height="19" viewBox="0 0 20 19"><rect x="1.5" y="4" width="16" height="9" fill="none" stroke="#1B6CC6" stroke-width="2.4"/><path d="M9.5 0.5 V18.5" stroke="#1B6CC6" stroke-width="2.6"/></svg>
<div class="a" style="left:1867.2px;top:549.2px;width:6.2px;height:6.2px;border-radius:3.1px;border:2.3px solid #1B6CC6"></div>
<svg style="left:1875px;top:554px" width="8" height="11" viewBox="0 0 8 11"><circle cx="3.8" cy="2.6" r="2.3" fill="#1B6CC6"/><path d="M5.6 2.8 Q5.8 6.5 1.6 9.2" fill="none" stroke="#1B6CC6" stroke-width="1.9" stroke-linecap="round"/></svg>
<svg style="left:1894px;top:548px" width="20" height="16" viewBox="0 0 20 16">
 <rect x="1" y="0.3" width="17.8" height="14.4" rx="2.8" fill="#1B6CC6"/>
 <g fill="#FFFFFF"><rect x="3" y="2.4" width="2.5" height="2.4"/><rect x="6.6" y="2.4" width="2.5" height="2.4"/><rect x="10.2" y="2.4" width="2.5" height="2.4"/><rect x="13.8" y="2.4" width="2.5" height="2.4"/>
 <rect x="3" y="6.2" width="2.5" height="2.4"/><rect x="6.6" y="6.2" width="2.5" height="2.4"/><rect x="10.2" y="6.2" width="2.5" height="2.4"/><rect x="13.8" y="6.2" width="2.5" height="2.4"/>
 <rect x="3" y="10" width="2.5" height="2.4"/><rect x="6.6" y="10" width="9.7" height="2.4"/></g>
</svg>
</body></html>
